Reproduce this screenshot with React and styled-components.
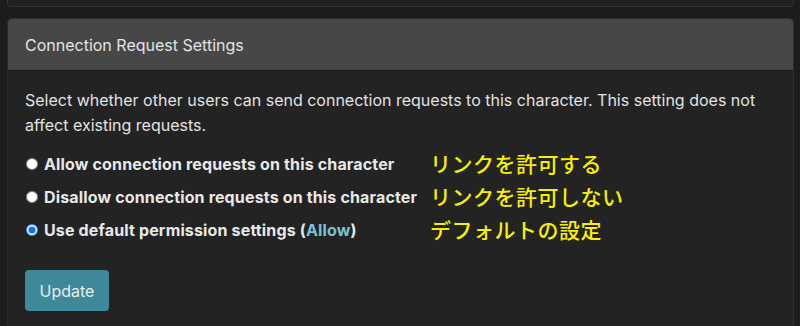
import { Fragment } from "react";
import styled, { createGlobalStyle } from "styled-components";

const GlobalStyle = createGlobalStyle`
  html, body {
    margin: 0;
    padding: 0;
    background: #1c1c1c;
  }
  body {
    font-family: Inter, "Noto Sans", sans-serif;
    color: #e6e6e6;
  }
`;

const Page = styled.div`
  padding: 0 6px 0 7px;
  height: 326px;
  overflow: hidden;
`;

const PrevCard = styled.div`
  height: 6px;
  background: #202020;
  border: 1px solid #333;
  border-top: none;
  border-radius: 0 0 4px 4px;
`;

const Card = styled.section`
  margin-top: 11px;
  background: #232323;
  border: 1px solid #2e2e2e;
  border-radius: 5px 5px 0 0;
  border-bottom: none;
`;

const Header = styled.header`
  background: #474747;
  border-bottom: 1px solid #1a1a1a;
  border-radius: 4px 4px 0 0;
  height: 51px;
  padding: 0 17px;
  display: flex;
  align-items: center;
  font-size: 16px;
  color: #e4e4e4;
`;

const Body = styled.div`
  padding: 17px 17px 40px;
`;

const Intro = styled.p`
  margin: 0 0 9px;
  font-size: 16px;
  line-height: 25px;
  color: #e2e2e2;
`;

const Options = styled.div`
  display: grid;
  grid-template-columns: 405px auto;
  grid-auto-rows: 33px;
  align-items: center;
`;

const OptionLabel = styled.label`
  display: flex;
  align-items: center;
  gap: 6px;
  font-size: 16px;
  font-weight: 700;
  letter-spacing: 0.15px;
  color: #e8e8e8;
`;

const Radio = styled.input`
  margin: 0 0 0 1px;
  width: 12px;
  height: 12px;
  accent-color: #1a73e8;
`;

const Accent = styled.span`
  color: #79c3d2;
`;

const Note = styled.span`
  font-family: "Noto Sans CJK JP", sans-serif;
  font-size: 21px;
  font-weight: 500;
  color: #f7f000;
  line-height: 1;
  letter-spacing: 0.5px;
`;

const Button = styled.button`
  margin-top: 24px;
  width: 84px;
  height: 41px;
  border: none;
  border-radius: 4px;
  background: #3e889a;
  color: #e3eef0;
  font-family: Inter, sans-serif;
  font-size: 16px;
`;

const options = [
  { label: "Allow connection requests on this character", note: "リンクを許可する" },
  { label: "Disallow connection requests on this character", note: "リンクを許可しない" },
  {
    label: (
      <span>
        Use default permission settings (<Accent>Allow</Accent>)
      </span>
    ),
    note: "デフォルトの設定",
    checked: true,
  },
];

export default function App() {
  return (
    <Page>
      <GlobalStyle />
      <PrevCard />
      <Card>
        <Header>Connection Request Settings</Header>
        <Body>
          <Intro>
            Select whether other users can send connection requests to this character. This setting does not
            affect existing requests.
          </Intro>
          <Options>
            {options.map((o, i) => (
              <Fragment key={i}>
                <OptionLabel>
                  <Radio type="radio" name="perm" defaultChecked={o.checked} />
                  {o.label}
                </OptionLabel>
                <Note>{o.note}</Note>
              </Fragment>
            ))}
          </Options>
          <Button>Update</Button>
        </Body>
      </Card>
    </Page>
  );
}
